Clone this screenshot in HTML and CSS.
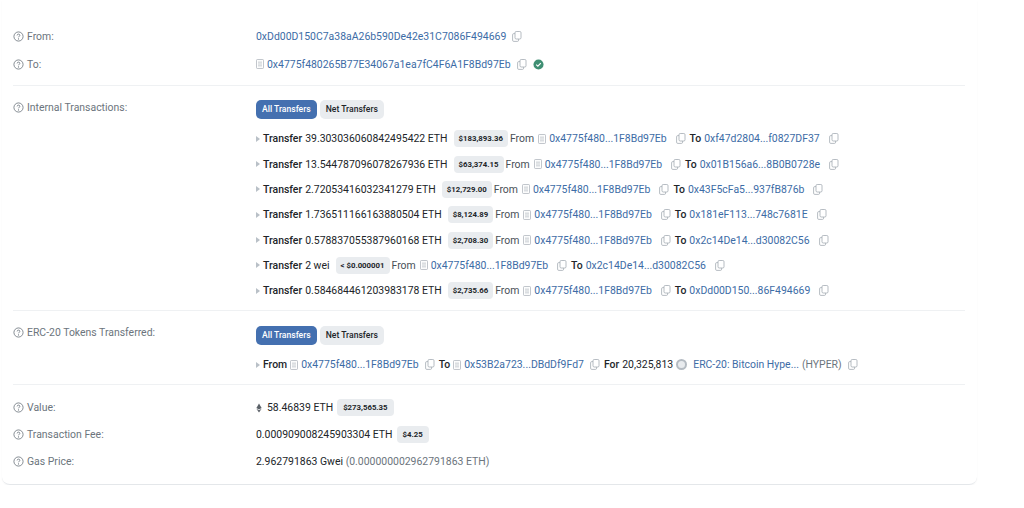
FILE: index.html
```html
<!DOCTYPE html>
<html lang="en">
<head>
  <meta charset="UTF-8">
  <meta name="viewport" content="width=device-width, initial-scale=1.0">
  <title>Transaction Details</title>
  <link rel="stylesheet" href="styles.css">
</head>
<body>
<svg class="defs" width="0" height="0">
  <symbol id="i-help" viewBox="0 0 12 12">
    <circle cx="6" cy="6" r="5" fill="none" stroke="currentColor" stroke-width=".9"/>
    <path d="M4.5 4.8c0-.9.7-1.4 1.5-1.4s1.5.5 1.5 1.3c0 1.1-1.5 1.1-1.5 2.2" fill="none" stroke="currentColor" stroke-width=".9"/>
    <circle cx="6" cy="8.6" r=".6" fill="currentColor"/>
  </symbol>
  <symbol id="i-copy" viewBox="0 0 10 11">
    <rect x="3" y=".5" width="6" height="7.5" rx="1.2" fill="none" stroke="currentColor" stroke-width=".8"/>
    <path d="M3 2.6H1.8A1.2 1.2 0 0 0 .6 3.8v5.4a1.2 1.2 0 0 0 1.2 1.2h3.6a1.2 1.2 0 0 0 1.2-1.2V8" fill="none" stroke="currentColor" stroke-width=".8"/>
  </symbol>
  <symbol id="i-doc" viewBox="0 0 9 11">
    <rect x=".5" y=".5" width="8" height="10" rx="1" fill="none" stroke="currentColor" stroke-width=".8"/>
    <path d="M2.2 3.4h4.6M2.2 5.5h4.6M2.2 7.6h4.6" stroke="currentColor" stroke-width=".7"/>
  </symbol>
</svg>

<div class="card">
  <section class="block">
    <div class="row row-addr">
      <div class="label"><svg class="help"><use href="#i-help"/></svg>From:</div>
      <div class="value">
        <a>0xDd00D150C7a38aA26b590De42e31C7086F494669</a>
        <svg class="copy copy-top"><use href="#i-copy"/></svg>
      </div>
    </div>
    <div class="row row-addr">
      <div class="label"><svg class="help"><use href="#i-help"/></svg>To:</div>
      <div class="value">
        <svg class="doc"><use href="#i-doc"/></svg>
        <a class="tight">0x4775f480265B77E34067a1ea7fC4F6A1F8Bd97Eb</a>
        <svg class="copy copy-top"><use href="#i-copy"/></svg>
        <svg class="verified" viewBox="0 0 12 12"><circle cx="6" cy="6" r="5.5" fill="#3f8f73"/><path d="M3.5 6.2l1.8 1.7 3.2-3.4" fill="none" stroke="#fff" stroke-width="1.3"/></svg>
      </div>
    </div>
  </section>

  <section class="block block-internal">
    <div class="row">
      <div class="label"><svg class="help"><use href="#i-help"/></svg>Internal Transactions:</div>
      <div class="value-col">
        <div class="tabs">
          <span class="tab active">All Transfers</span>
          <span class="tab">Net Transfers</span>
        </div>
        <div class="transfers">
          <div class="transfer">
            <i class="caret"></i><b>Transfer</b> <span class="amt">39.303036060842495422 ETH</span>
            <span class="pill">$183,893.36</span>
            <span class="word">From</span>
            <svg class="doc"><use href="#i-doc"/></svg><a class="tight">0x4775f480...1F8Bd97Eb</a>
            <svg class="copy"><use href="#i-copy"/></svg>
            <b>To</b> <a>0xf47d2804...f0827DF37</a>
            <svg class="copy"><use href="#i-copy"/></svg>
          </div>
          <div class="transfer">
            <i class="caret"></i><b>Transfer</b> <span class="amt">13.544787096078267936 ETH</span>
            <span class="pill">$63,374.15</span>
            <span class="word">From</span>
            <svg class="doc"><use href="#i-doc"/></svg><a class="tight">0x4775f480...1F8Bd97Eb</a>
            <svg class="copy"><use href="#i-copy"/></svg>
            <b>To</b> <a>0x01B156a6...8B0B0728e</a>
            <svg class="copy"><use href="#i-copy"/></svg>
          </div>
          <div class="transfer">
            <i class="caret"></i><b>Transfer</b> <span class="amt">2.72053416032341279 ETH</span>
            <span class="pill">$12,729.00</span>
            <span class="word">From</span>
            <svg class="doc"><use href="#i-doc"/></svg><a class="tight">0x4775f480...1F8Bd97Eb</a>
            <svg class="copy"><use href="#i-copy"/></svg>
            <b>To</b> <a>0x43F5cFa5...937fB876b</a>
            <svg class="copy"><use href="#i-copy"/></svg>
          </div>
          <div class="transfer">
            <i class="caret"></i><b>Transfer</b> <span class="amt">1.736511166163880504 ETH</span>
            <span class="pill">$8,124.89</span>
            <span class="word">From</span>
            <svg class="doc"><use href="#i-doc"/></svg><a class="tight">0x4775f480...1F8Bd97Eb</a>
            <svg class="copy"><use href="#i-copy"/></svg>
            <b>To</b> <a>0x181eF113...748c7681E</a>
            <svg class="copy"><use href="#i-copy"/></svg>
          </div>
          <div class="transfer">
            <i class="caret"></i><b>Transfer</b> <span class="amt">0.578837055387960168 ETH</span>
            <span class="pill">$2,708.30</span>
            <span class="word">From</span>
            <svg class="doc"><use href="#i-doc"/></svg><a class="tight">0x4775f480...1F8Bd97Eb</a>
            <svg class="copy"><use href="#i-copy"/></svg>
            <b>To</b> <a>0x2c14De14...d30082C56</a>
            <svg class="copy"><use href="#i-copy"/></svg>
          </div>
          <div class="transfer">
            <i class="caret"></i><b>Transfer</b> <span class="amt">2 wei</span>
            <span class="pill">&lt; $0.000001</span>
            <span class="word">From</span>
            <svg class="doc"><use href="#i-doc"/></svg><a class="tight">0x4775f480...1F8Bd97Eb</a>
            <svg class="copy"><use href="#i-copy"/></svg>
            <b>To</b> <a>0x2c14De14...d30082C56</a>
            <svg class="copy"><use href="#i-copy"/></svg>
          </div>
          <div class="transfer">
            <i class="caret"></i><b>Transfer</b> <span class="amt">0.584684461203983178 ETH</span>
            <span class="pill">$2,735.66</span>
            <span class="word">From</span>
            <svg class="doc"><use href="#i-doc"/></svg><a class="tight">0x4775f480...1F8Bd97Eb</a>
            <svg class="copy"><use href="#i-copy"/></svg>
            <b>To</b> <a>0xDd00D150...86F494669</a>
            <svg class="copy"><use href="#i-copy"/></svg>
          </div>
        </div>
      </div>
    </div>
  </section>

  <section class="block block-tokens">
    <div class="row">
      <div class="label"><svg class="help"><use href="#i-help"/></svg>ERC-20 Tokens Transferred:</div>
      <div class="value-col">
        <div class="tabs">
          <span class="tab active">All Transfers</span>
          <span class="tab">Net Transfers</span>
        </div>
        <div class="transfers token-list">
          <div class="transfer">
            <i class="caret"></i><b class="from">From</b>
            <svg class="doc"><use href="#i-doc"/></svg><a class="tight">0x4775f480...1F8Bd97Eb</a>
            <svg class="copy copy-near"><use href="#i-copy"/></svg>
            <b>To</b>
            <svg class="doc"><use href="#i-doc"/></svg><a class="tight">0x53B2a723...DBdDf9Fd7</a>
            <svg class="copy copy-near"><use href="#i-copy"/></svg>
            <b>For</b> <span>20,325,813</span>
            <span class="token"></span>
            <a>ERC-20: Bitcoin Hype...</a> <span class="muted">(HYPER)</span>
            <svg class="copy copy-near copy-end"><use href="#i-copy"/></svg>
          </div>
        </div>
      </div>
    </div>
  </section>

  <section class="block block-last">
    <div class="row row-fee">
      <div class="label"><svg class="help"><use href="#i-help"/></svg>Value:</div>
      <div class="value">
        <svg class="eth" viewBox="0 0 8 12"><path d="M4 0L.5 6 4 8l3.5-2z" fill="#5b6168"/><path d="M.5 7L4 12l3.5-5L4 9z" fill="#5b6168"/></svg>
        <span>58.46839 ETH</span>
        <span class="pill">$273,565.35</span>
      </div>
    </div>
    <div class="row row-fee">
      <div class="label"><svg class="help"><use href="#i-help"/></svg>Transaction Fee:</div>
      <div class="value">
        <span>0.000909008245903304 ETH</span>
        <span class="pill">$4.25</span>
      </div>
    </div>
    <div class="row row-fee">
      <div class="label"><svg class="help"><use href="#i-help"/></svg>Gas Price:</div>
      <div class="value">
        <span>2.962791863 Gwei <span class="muted">(0.000000002962791863 ETH)</span></span>
      </div>
    </div>
  </section>
</div>
</body>
</html>
```

FILE: styles.css
```css
body {
  margin: 0;
  font-family: Roboto, "Liberation Sans", sans-serif;
  font-size: 10.45px;
  background-color: #ffffff;
  color: #212529;
}
.defs {
  position: absolute;
}
.card {
  width: 975px;
  height: 485px;
  margin-left: 2px;
  padding: 22px 12px 0 11px;
  box-sizing: border-box;
  border-radius: 0 0 8px 8px;
  border-bottom: 1px solid #e4e7ea;
  box-shadow: 0 1px 2px rgba(0, 0, 0, 0.04);
}
.block {
  border-bottom: 1px solid #eff1f3;
}
.block:first-child {
  height: 64px;
  box-sizing: border-box;
}
.block-internal {
  padding-top: 14px;
  height: 225px;
  box-sizing: border-box;
}
.block-tokens {
  padding-top: 15px;
  height: 74px;
  box-sizing: border-box;
}
.block-last {
  border-bottom: none;
  padding-top: 9px;
}
.row {
  display: flex;
  align-items: flex-start;
}
.row-addr {
  height: 28px;
  align-items: center;
}
.row-fee {
  height: 27px;
  align-items: center;
}
.label {
  width: 243px;
  flex-shrink: 0;
  display: flex;
  align-items: center;
  color: #6c757d;
}
.block-internal .label {
  padding-top: 1px;
}
.help {
  width: 11px;
  height: 11px;
  margin-right: 3px;
  color: #6c757d;
}
.value {
  display: flex;
  align-items: center;
}
.value-col {
  flex: 1;
}
a {
  color: #3d6ca6;
}
.tight {
  margin-left: 3px;
}
.tabs {
  display: flex;
  gap: 3px;
}
.tab {
  font-size: 8.6px;
  font-weight: 500;
  padding: 0 6px;
  line-height: 19px;
  border-radius: 5px;
  background-color: #e9ecef;
  color: #212529;
}
.tab.active {
  background-color: #4470b0;
  color: #ffffff;
}
.transfers {
  margin-top: 7px;
}
.transfer {
  height: 25.35px;
  display: flex;
  align-items: center;
  white-space: pre;
}
.transfer b, .transfer span, .transfer a {
  margin-right: 3px;
}
.transfer b {
  font-weight: 500;
}
.caret {
  width: 0;
  height: 0;
  border-left: 4px solid #b9c0c7;
  border-top: 3px solid transparent;
  border-bottom: 3px solid transparent;
  margin-right: 3px;
}
.pill {
  font-size: 7.8px;
  font-weight: 700;
  line-height: 17px;
  padding: 0 5px;
  margin-left: 3px;
  border-radius: 4px;
  background-color: #e9ecef;
}
.value .pill {
  margin-left: 4px;
  padding: 0 6px;
}
.transfer .word {
  margin-left: -1px;
  margin-right: 4px;
  color: #495057;
}
.doc {
  width: 8px;
  height: 10px;
  color: #a3abb3;
  flex-shrink: 0;
}
.copy {
  width: 10px;
  height: 11px;
  color: #a3abb3;
  margin: 0 4px 0 6px;
  flex-shrink: 0;
}
.copy-top {
  margin-right: 6px;
}
.copy-near {
  margin: 0 4px 0 3px;
}
.copy-end {
  margin-left: 3px;
}
.verified {
  width: 11px;
  height: 11px;
}
.transfer .token {
  width: 11px;
  height: 11px;
  border-radius: 50%;
  background-color: #e8ebee;
  border: 2px solid #b4bbc2;
  box-sizing: border-box;
  margin-left: 0;
  margin-right: 6px;
}
.muted {
  color: #6c757d;
}
.eth {
  width: 6px;
  height: 10px;
  margin-right: 5px;
}
```
